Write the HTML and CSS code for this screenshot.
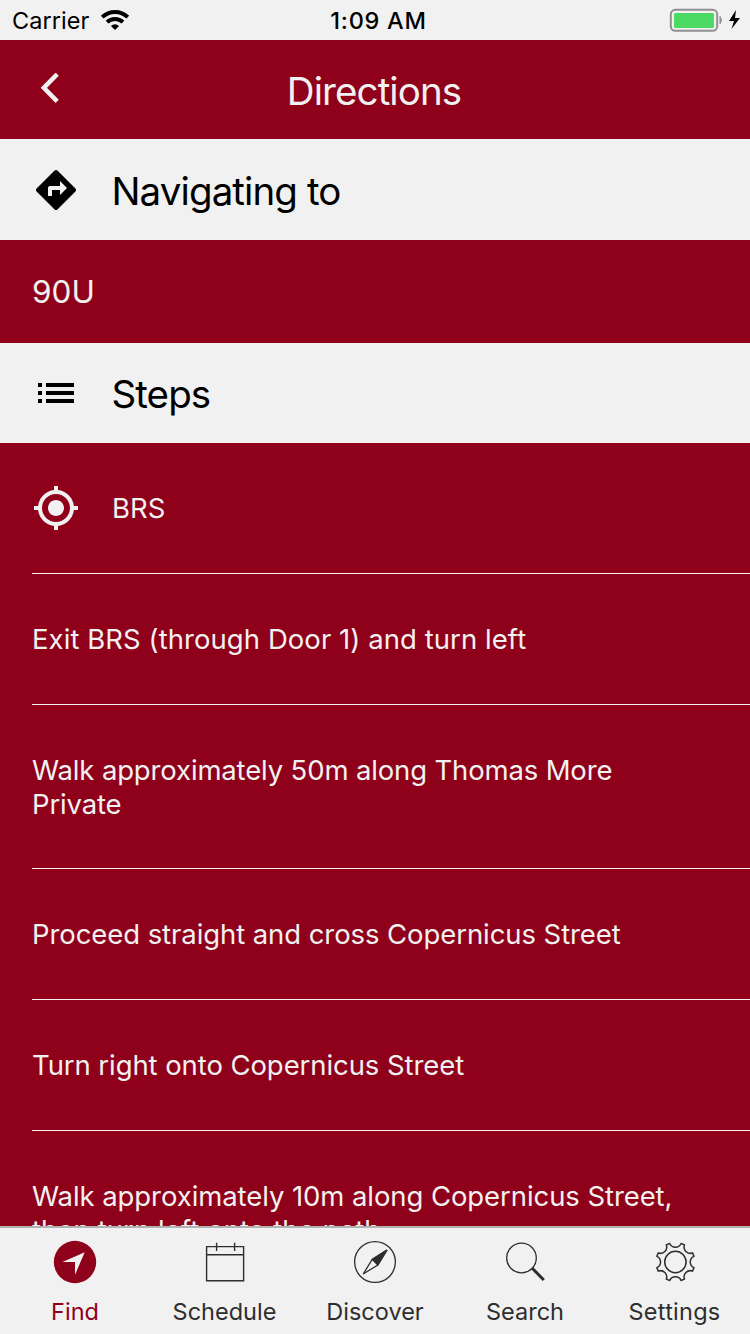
FILE: index.html
```
<!DOCTYPE html>
<html lang="en">
<head>
<meta charset="utf-8">
<title>Directions</title>
<link rel="stylesheet" href="styles.css">
</head>
<body>
<div class="app">
  <div class="status">
    <div class="status-left">
      <span class="carrier">Carrier</span>
      <svg class="wifi" width="30" height="22" viewBox="0 0 30 22"><g fill="none" stroke="#000" stroke-width="3.9"><path d="M2.2 8.2A18.2 18.2 0 0 1 27.8 8.2"/><path d="M7.1 13.2A11.3 11.3 0 0 1 22.9 13.2"/></g><path d="M10.9 16.9A6 6 0 0 1 19.1 16.9L15 21Z"/></svg>
    </div>
    <span class="time">1:09 AM</span>
    <svg class="battery" width="72" height="24" viewBox="0 0 72 24"><rect x="1.8" y="1.8" width="46.4" height="21" rx="4.5" fill="none" stroke="#909092" stroke-width="2"/><rect x="5" y="5" width="40" height="15" rx="1.5" fill="#4cd964"/><path d="M51 8.5Q54 12 51 16Z" fill="#909092" stroke="#909092"/><path d="M67 2 60 13H65L62.5 21 71 10H66Z"/></svg>
  </div>
  <header class="navbar">
    <svg class="back" width="19" height="30" viewBox="0 0 19 30"><path d="M17.2 1.2 3.8 14.8 17.2 28.4" fill="none" stroke="#f1f1f1" stroke-width="4.5"/></svg>
    <h1 class="title">Directions</h1>
  </header>
  <main class="content">
    <section class="heading">
      <svg class="icon" width="48" height="48" viewBox="0 0 24 24"><path d="M21.71 11.29l-9-9c-.39-.39-1.02-.39-1.41 0l-9 9c-.39.39-.39 1.02 0 1.41l9 9c.39.39 1.02.39 1.41 0l9-9c.39-.38.39-1.01 0-1.41zM14 14.5V12h-4v3H8v-4c0-.55.45-1 1-1h5V7.5l3.5 3.5-3.5 3.5z"/></svg>
      <h2 class="heading-text nav-text">Navigating to</h2>
    </section>
    <div class="destination"><span class="room">90U</span></div>
    <section class="heading steps-heading">
      <svg class="icon" width="48" height="48" viewBox="0 0 24 24"><path d="M3 13h2v-2H3v2zm0 4h2v-2H3v2zm0-8h2V7H3v2zm4 4h14v-2H7v2zm0 4h14v-2H7v2zM7 7v2h14V7H7z"/></svg>
      <h2 class="heading-text steps-text">Steps</h2>
    </section>
    <div class="step start">
      <svg class="icon" width="48" height="48" viewBox="0 0 24 24" fill="#f1f1f1"><path d="M12 8c-2.21 0-4 1.79-4 4s1.79 4 4 4 4-1.79 4-4-1.79-4-4-4zm8.94 3A8.994 8.994 0 0 0 13 3.06V1h-2v2.06A8.994 8.994 0 0 0 3.06 11H1v2h2.06A8.994 8.994 0 0 0 11 20.94V23h2v-2.06A8.994 8.994 0 0 0 20.94 13H23v-2h-2.06zM12 19c-3.87 0-7-3.13-7-7s3.13-7 7-7 7 3.13 7 7-3.13 7-7 7z"/></svg>
      <span class="brs">BRS</span>
    </div>
    <div class="step"><span class="s1">Exit BRS (through Door 1) and turn left</span></div>
    <div class="step two-line"><span class="s2">Walk approximately 50m along Thomas More<br>Private</span></div>
    <div class="step"><span class="s3">Proceed straight and cross Copernicus Street</span></div>
    <div class="step"><span class="s4">Turn right onto Copernicus Street</span></div>
    <div class="step"><span class="s5">Walk approximately 10m along Copernicus Street,<br><span class="s6">then turn left onto the path</span></span></div>
  </main>
  <nav class="tabs">
    <div class="tab active">
      <svg width="50" height="50" viewBox="-25 -25 50 50"><circle r="21.2" fill="#8f001a"/><path d="M9.7-9.8-12.5 0H0V12.8Z" fill="#f1f1f1"/></svg>
      <span class="find">Find</span>
    </div>
    <div class="tab">
      <svg width="50" height="50" viewBox="-25 -25 50 50"><path d="M-18.4-15.4H18.6V18.7H-18.4ZM-18.4-7.3H18.6M-8.4-19.3V-11M9.6-19.3V-11" fill="none" stroke="#2e2e2e" stroke-width="1.4"/></svg>
      <span class="schedule">Schedule</span>
    </div>
    <div class="tab">
      <svg width="50" height="50" viewBox="-25 -25 50 50" fill="none" stroke="#2e2e2e" stroke-width="1.3"><circle r="20.4"/><path d="M12-12-2.8-2.6-11.8 12 2.8 3Z"/><path d="M12-12-2.8-2.6 2.8 3Z" fill="#2e2e2e"/></svg>
      <span class="discover">Discover</span>
    </div>
    <div class="tab">
      <svg width="50" height="50" viewBox="-25 -25 50 50" fill="none" stroke="#2e2e2e"><circle cx="-3.5" cy="-4" r="14.8" stroke-width="1.3"/><path d="M7 6 18.8 18" stroke-width="3"/></svg>
      <span class="search">Search</span>
    </div>
    <div class="tab">
      <svg width="50" height="50" viewBox="-25.4 -25 50 50" fill="none" stroke="#2e2e2e" stroke-width="1.5" stroke-linejoin="round"><circle r="10.7"/><path d="M-5.67-18.55A6.2 6.2 0 0 0 5.67-18.55L9.11-17.13A6.2 6.2 0 0 0 17.13-9.11L18.55-5.67A6.2 6.2 0 0 0 18.55 5.67L17.13 9.11A6.2 6.2 0 0 0 9.11 17.13L5.67 18.55A6.2 6.2 0 0 0-5.67 18.55L-9.11 17.13A6.2 6.2 0 0 0-17.13 9.11L-18.55 5.67A6.2 6.2 0 0 0-18.55-5.67L-17.13-9.11A6.2 6.2 0 0 0-9.11-17.13Z"/></svg>
      <span class="settings">Settings</span>
    </div>
  </nav>
</div>
</body>
</html>
```
FILE: styles.css
```
* { box-sizing: border-box; }
body { margin: 0; font-family: Inter, "Liberation Sans", sans-serif; background: #8f001a; font-feature-settings: "calt" 0, "liga" 0; }
svg { display: block; flex: none; }
h1, h2 { margin: 0; font-weight: 400; }
span, h1, h2 { white-space: nowrap; }
.app { width: 750px; height: 1334px; overflow: hidden; display: flex; flex-direction: column; color: #f1f1f1; }
.status { height: 40px; flex: none; background: #f1f1f1; color: #000; display: grid; grid-template-columns: 1fr auto 1fr; align-items: center; padding: 0 9px 0 12px; font-size: 23.5px; }
.status-left { display: flex; gap: 11px; align-items: center; }
.carrier { letter-spacing: 0.04px; }
.time { font-weight: 500; letter-spacing: 0.75px; padding-left: 4px; }
.battery { justify-self: end; }
.navbar { height: 99px; flex: none; display: grid; grid-template-columns: 100px 1fr 100px; align-items: center; }
.back { margin: -4px 0 0 40px; }
.title { text-align: center; font-size: 38.5px; line-height: 48px; padding: 2px 2px 0 0; letter-spacing: -0.9px; }
.content { flex: 1; min-height: 0; overflow: hidden; }
.heading { height: 101px; background: #f1f1f1; color: #000; display: flex; align-items: center; gap: 32px; padding-left: 32px; }
.heading-text { font-size: 38.5px; line-height: 48px; padding-top: 2px; margin-left: -0.5px; letter-spacing: -0.9px; }
.steps-heading { height: 100px; }
.destination { height: 103px; display: flex; align-items: center; padding-left: 32px; font-size: 31.5px; }
.step { height: 131px; margin-left: 32px; border-bottom: 1px solid #f1f1f1; display: flex; align-items: center; font-size: 27.5px; line-height: 34px; }
.start { gap: 32px; }
.two-line { height: 164px; }
.step:last-child { height: auto; padding: 48px 0; }
.s1 { letter-spacing: 0.06px; }
.s2 { letter-spacing: -0.15px; }
.s3, .s4, .s5 { letter-spacing: -0.08px; }
.s6 { letter-spacing: 0.08px; }
.tabs { height: 108px; flex: none; border-top: 2px solid #b2b2b2; background: #f1f1f1; display: grid; grid-template-columns: repeat(5, 1fr); }
.tab { display: flex; flex-direction: column; align-items: center; padding-top: 9.3px; color: #2e2e2e; font-size: 23.5px; line-height: 30px; gap: 9.7px; }
.schedule { margin-right: 1px; }
.settings { letter-spacing: 0.25px; margin-right: 1px; }
.active { color: #8f001a; }
```
